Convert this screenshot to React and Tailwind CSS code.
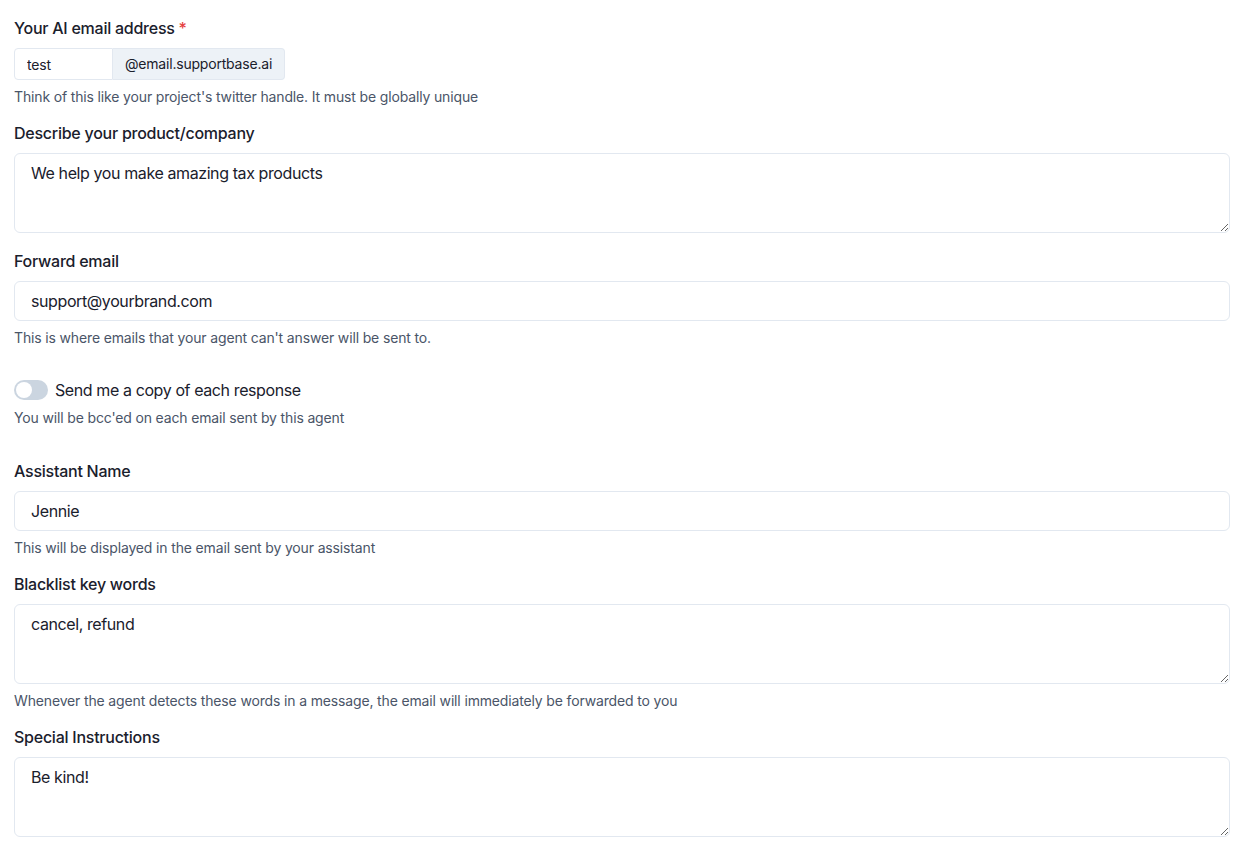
import React, { useState } from 'react';

const font = { fontFamily: 'Inter, "Noto Sans", sans-serif' };

const Label = ({ children, required }) => (
  <label className="block h-6 mb-2 text-base leading-6 font-medium tracking-[-0.25px] text-[#1A202C]">
    {children}
    {required && <span className="ml-1 text-[#E53E3E]">*</span>}
  </label>
);

const Helper = ({ children }) => (
  <p className="mt-[7px] h-5 text-sm leading-5 tracking-[-0.15px] text-[#4A5568]">{children}</p>
);

const TextInput = ({ value }) => (
  <input
    type="text"
    defaultValue={value}
    className="block w-full h-10 px-4 text-base tracking-[-0.4px] text-[#1A202C] border border-[#E2E8F0] rounded-md outline-none bg-white"
  />
);

const TextArea = ({ value }) => (
  <textarea
    defaultValue={value}
    className="block w-full h-20 px-4 pt-[7px] pb-2 text-base leading-6 tracking-[-0.4px] text-[#1A202C] border border-[#E2E8F0] rounded-md outline-none bg-white"
  />
);

const App = () => {
  const [copy, setCopy] = useState(false);

  return (
    <div className="min-h-screen bg-white pl-[14px] pr-[22px] pt-4" style={font}>
      {/* AI email address */}
      <div>
        <Label required>Your AI email address</Label>
        <div className="flex h-8">
          <input
            type="text"
            defaultValue="test"
            className="w-[99px] h-8 px-3 text-sm tracking-[-0.2px] text-[#1A202C] border border-[#E2E8F0] rounded-l-sm outline-none"
          />
          <div className="flex items-center h-8 px-3 text-sm tracking-[-0.2px] text-[#1A202C] bg-[#EDF2F7] border border-l-0 border-[#E2E8F0] rounded-r-sm">
            @email.supportbase.ai
          </div>
        </div>
        <Helper>Think of this like your project's twitter handle. It must be globally unique</Helper>
      </div>

      <div className="mt-[14px]">
        <Label>Describe your product/company</Label>
        <TextArea value="We help you make amazing tax products" />
      </div>

      <div className="mt-4">
        <Label>Forward email</Label>
        <TextInput value="support@yourbrand.com" />
        <Helper>This is where emails that your agent can't answer will be sent to.</Helper>
      </div>

      {/* Copy toggle */}
      <div className="mt-[30px]">
        <div className="flex items-center h-6 gap-[7px]">
          <button
            type="button"
            onClick={() => setCopy(!copy)}
            className={`flex items-center w-[34px] h-5 p-[2px] rounded-full ${copy ? 'bg-[#3182CE] justify-end' : 'bg-[#CBD5E0] justify-start'}`}
          >
            <span className="block w-4 h-4 rounded-full bg-white" />
          </button>
          <span className="text-base tracking-[-0.4px] text-[#1A202C]">Send me a copy of each response</span>
        </div>
        <p className="mt-[6px] h-5 text-sm leading-5 tracking-[-0.15px] text-[#4A5568]">You will be bcc'ed on each email sent by this agent</p>
      </div>

      <div className="mt-[31px]">
        <Label>Assistant Name</Label>
        <TextInput value="Jennie" />
        <Helper>This will be displayed in the email sent by your assistant</Helper>
      </div>

      <div className="mt-[14px]">
        <Label>Blacklist key words</Label>
        <TextArea value="cancel, refund" />
        <Helper>Whenever the agent detects these words in a message, the email will immediately be forwarded to you</Helper>
      </div>

      <div className="mt-[14px]">
        <Label>Special Instructions</Label>
        <TextArea value="Be kind!" />
      </div>
    </div>
  );
};

export default App;
